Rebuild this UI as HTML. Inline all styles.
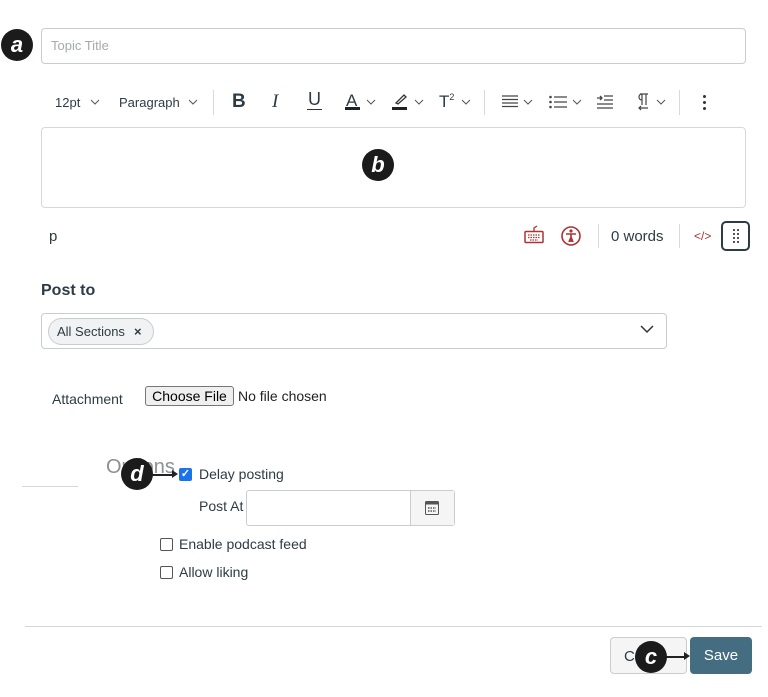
<!DOCTYPE html>
<html><head><meta charset="utf-8"><style>
*{margin:0;padding:0;box-sizing:border-box}
body{width:768px;height:697px;background:#fff;position:relative;overflow:hidden;font-family:"Liberation Sans",sans-serif;color:#2d3b45}
.a{position:absolute}
.badge{position:absolute;width:32px;height:32px;border-radius:50%;background:#1b1b1b;color:#fff;font-weight:bold;font-style:italic;font-size:22px;text-align:center;line-height:31px}
.box{position:absolute;border:1px solid #c7cdd1;border-radius:4px;background:#fff}
.t{position:absolute;font-size:14px;white-space:nowrap}
.chev{position:absolute;width:10px;height:6px}
.sep{position:absolute;width:1px;background:#d7dadd}
.cb{position:absolute;width:13px;height:13px;border:1px solid #555;border-radius:2px;background:#fff}
</style></head><body>
<div class="badge" style="left:1px;top:29px">a</div>
<div class="box" style="left:41px;top:28px;width:705px;height:36px"></div>
<div class="t" style="left:51px;top:38px;color:#a5aaae;font-size:13px">Topic Title</div>

<div class="t" style="left:55px;top:95px;font-size:13px">12pt</div>
<svg class="chev" style="left:90px;top:99px" viewBox="0 0 10 6"><polyline points="1,1 5,5 9,1" fill="none" stroke="#555" stroke-width="1"/></svg>
<div class="t" style="left:119px;top:95px;font-size:13px">Paragraph</div>
<svg class="chev" style="left:188px;top:99px" viewBox="0 0 10 6"><polyline points="1,1 5,5 9,1" fill="none" stroke="#555" stroke-width="1"/></svg>
<div class="sep" style="left:213px;top:90px;height:25px"></div>
<div class="t" style="left:232px;top:91px;font-size:19px;font-weight:bold">B</div>
<div class="t" style="left:272px;top:91px;font-size:19px;font-style:italic;font-family:'Liberation Serif',serif">I</div>
<div class="t" style="left:308px;top:89px;font-size:18px">U</div>
<div class="a" style="left:307px;top:109px;width:15px;height:1px;background:#333"></div>
<div class="t" style="left:346px;top:91px;font-size:17px">A</div>
<div class="a" style="left:345px;top:107px;width:15px;height:3px;background:#222"></div>
<svg class="chev" style="left:366px;top:99px" viewBox="0 0 10 6"><polyline points="1,1 5,5 9,1" fill="none" stroke="#555"/></svg>
<svg class="a" style="left:392px;top:92px" width="16" height="14" viewBox="0 0 16 14"><path d="M4 11 L12 3 L14 5 L6 12 Z" fill="none" stroke="#333" stroke-width="1.3"/></svg>
<div class="a" style="left:392px;top:107px;width:15px;height:3px;background:#222"></div>
<svg class="chev" style="left:414px;top:99px" viewBox="0 0 10 6"><polyline points="1,1 5,5 9,1" fill="none" stroke="#555"/></svg>
<div class="t" style="left:439px;top:92px;font-size:17px">T<sup style="font-size:9px;vertical-align:7px">2</sup></div>
<svg class="chev" style="left:461px;top:99px" viewBox="0 0 10 6"><polyline points="1,1 5,5 9,1" fill="none" stroke="#555"/></svg>
<div class="sep" style="left:484px;top:90px;height:25px"></div>
<svg class="a" style="left:502px;top:95px" width="16" height="14" viewBox="0 0 16 14"><path d="M0 1H16M0 4.5H16M0 8H16M0 11.5H16" stroke="#444" stroke-width="1.3"/></svg>
<svg class="chev" style="left:523px;top:99px" viewBox="0 0 10 6"><polyline points="1,1 5,5 9,1" fill="none" stroke="#555"/></svg>
<svg class="a" style="left:549px;top:95px" width="18" height="14" viewBox="0 0 18 14"><path d="M5 2H18M5 7H18M5 12H18" stroke="#444" stroke-width="1.3"/><circle cx="1.5" cy="2" r="1.3" fill="#444"/><circle cx="1.5" cy="7" r="1.3" fill="#444"/><circle cx="1.5" cy="12" r="1.3" fill="#444"/></svg>
<svg class="chev" style="left:572px;top:99px" viewBox="0 0 10 6"><polyline points="1,1 5,5 9,1" fill="none" stroke="#555"/></svg>
<svg class="a" style="left:597px;top:95px" width="16" height="14" viewBox="0 0 16 14"><path d="M7 1H16M7 5H16M0 9H16M0 13H16M0 3H5M3 1L5 3L3 5" fill="none" stroke="#444" stroke-width="1.3"/></svg>
<svg class="a" style="left:636px;top:93px" width="14" height="18" viewBox="0 0 14 18"><path d="M6 1V12M10 1V12M4 1H12M6 1C2 1 2 7 6 7M12 15H3M5 13L3 15L5 17" fill="none" stroke="#444" stroke-width="1.2"/></svg>
<svg class="chev" style="left:656px;top:99px" viewBox="0 0 10 6"><polyline points="1,1 5,5 9,1" fill="none" stroke="#555"/></svg>
<div class="sep" style="left:679px;top:90px;height:25px"></div>
<div class="a" style="left:703px;top:95px;width:3px;height:3px;border-radius:50%;background:#333;box-shadow:0 6px 0 #333,0 12px 0 #333"></div>

<div class="box" style="left:41px;top:127px;width:705px;height:81px;border-color:#d5d8db"></div>
<div class="badge" style="left:362px;top:149px">b</div>

<div class="t" style="left:49px;top:228px;font-size:15px">p</div>
<svg class="a" style="left:524px;top:225px" width="20" height="20" viewBox="0 0 20 20"><path d="M10 6V3L13 1" fill="none" stroke="#a33" stroke-width="1.3"/><rect x="1" y="6.5" width="18" height="11" rx="1" fill="none" stroke="#a33" stroke-width="1.5"/><path d="M4 10H16M4 12.5H16M6 15H14" stroke="#a33" stroke-width="1.3" stroke-dasharray="1.5 1"/></svg>
<svg class="a" style="left:561px;top:226px" width="20" height="20" viewBox="0 0 20 20"><circle cx="10" cy="10" r="9" fill="none" stroke="#a33" stroke-width="1.6"/><circle cx="10" cy="5" r="1.6" fill="#a33"/><path d="M5 8H15M10 8V16M8 16L10 11L12 16" fill="none" stroke="#a33" stroke-width="1.6"/></svg>
<div class="sep" style="left:598px;top:224px;height:24px"></div>
<div class="t" style="left:611px;top:228px;font-size:15px">0 words</div>
<div class="sep" style="left:679px;top:224px;height:24px"></div>
<div class="t" style="left:694px;top:229px;font-size:12px;color:#a33">&lt;/&gt;</div>
<div class="a" style="left:721px;top:221px;width:29px;height:30px;border:2px solid #2d3b45;border-radius:5px"></div>
<div class="a" style="left:733px;top:229px;width:2px;height:2px;background:#555;box-shadow:4px 0 #555,0 4px #555,4px 4px #555,0 8px #555,4px 8px #555,0 12px #555,4px 12px #555"></div>

<div class="t" style="left:41px;top:282px;font-size:16px;font-weight:bold">Post to</div>
<div class="box" style="left:41px;top:313px;width:626px;height:36px"></div>
<div class="a" style="left:48px;top:318px;width:106px;height:27px;border:1px solid #c7cdd1;border-radius:14px;background:#f1f2f3"></div>
<div class="t" style="left:57px;top:324px;font-size:13px">All Sections</div>
<div class="t" style="left:134px;top:324px;font-size:13px;font-weight:bold">×</div>
<svg class="a" style="left:640px;top:325px" width="14" height="9" viewBox="0 0 14 9"><polyline points="1,1 7,7 13,1" fill="none" stroke="#333" stroke-width="1.5"/></svg>

<div class="t" style="left:52px;top:391px;font-size:14px">Attachment</div>
<div class="a" style="left:145px;top:386px;width:89px;height:20px;border:1px solid #767676;border-radius:3px;background:#efefef;font-size:14px;color:#000;text-align:center;line-height:18px">Choose File</div>
<div class="t" style="left:238px;top:388px;font-size:14px;color:#222">No file chosen</div>

<div class="t" style="left:106px;top:456px;font-size:20px;color:#8a9095">Options</div>
<div class="a" style="left:22px;top:486px;width:56px;height:1px;background:#d5d8db"></div>
<div class="badge" style="left:121px;top:458px">d</div>
<div class="a" style="left:152px;top:474px;width:22px;height:1.5px;background:#222"></div>
<div class="a" style="left:172px;top:470px;border-left:6px solid #222;border-top:4px solid transparent;border-bottom:4px solid transparent"></div>
<div class="a" style="left:179px;top:468px;width:13px;height:13px;border-radius:2px;background:#1a73e8;color:#fff;font-size:11px;line-height:13px;text-align:center;font-weight:bold">✓</div>
<div class="t" style="left:199px;top:466px">Delay posting</div>
<div class="t" style="left:199px;top:498px">Post At</div>
<div class="box" style="left:246px;top:490px;width:209px;height:36px;border-radius:3px"></div>
<div class="a" style="left:410px;top:491px;width:44px;height:34px;background:#f5f5f5;border-left:1px solid #c7cdd1"></div>
<svg class="a" style="left:425px;top:500px" width="14" height="15" viewBox="0 0 14 15"><rect x="0.5" y="1.5" width="13" height="13" rx="1" fill="none" stroke="#555"/><rect x="0.5" y="1.5" width="13" height="3" fill="#555"/><path d="M3 8H11M3 11H11" stroke="#555" stroke-width="1.5" stroke-dasharray="1.5 1"/></svg>
<div class="cb" style="left:160px;top:538px"></div>
<div class="t" style="left:179px;top:536px">Enable podcast feed</div>
<div class="cb" style="left:160px;top:566px"></div>
<div class="t" style="left:179px;top:564px">Allow liking</div>

<div class="a" style="left:25px;top:626px;width:737px;height:1px;background:#d5d8db"></div>
<div class="a" style="left:610px;top:637px;width:77px;height:37px;border:1px solid #c7cdd1;border-radius:4px;background:#f5f5f5"></div>
<div class="t" style="left:624px;top:648px;font-size:15px">C</div>
<div class="a" style="left:690px;top:637px;width:62px;height:37px;border-radius:4px;background:#456d82;color:#fff;font-size:15px;text-align:center;line-height:37px">Save</div>
<div class="a" style="left:665px;top:656px;width:20px;height:1.5px;background:#222"></div>
<div class="a" style="left:684px;top:652px;border-left:6px solid #222;border-top:4px solid transparent;border-bottom:4px solid transparent"></div>
<div class="badge" style="left:635px;top:641px">c</div>
</body></html>
